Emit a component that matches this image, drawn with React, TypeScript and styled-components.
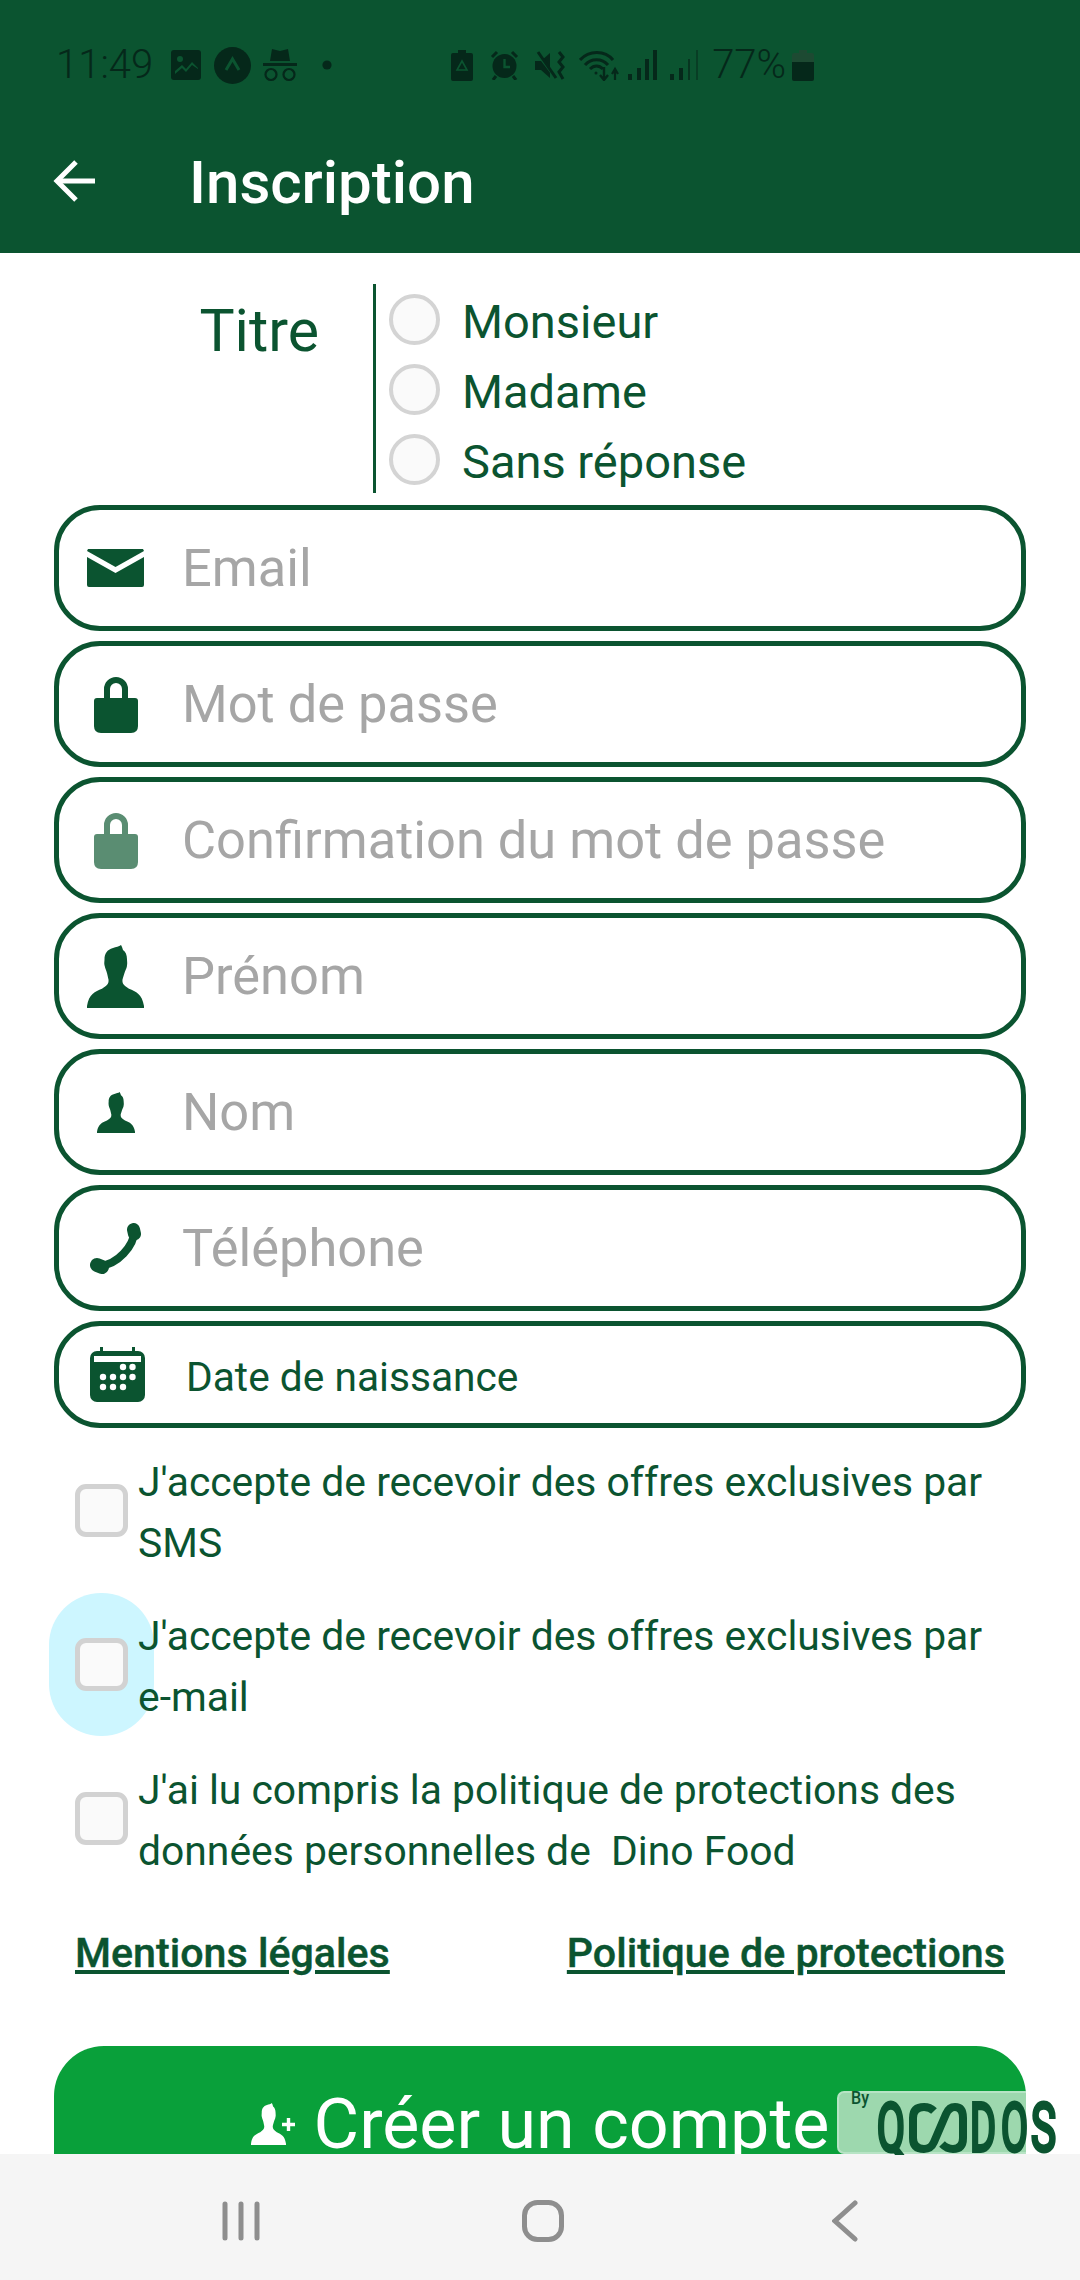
import React from "react";
import styled, { createGlobalStyle } from "styled-components";

const GREEN = "#0b5430";
const STATUS_INK = "#05281a";

const GlobalStyle = createGlobalStyle`
  html, body {
    margin: 0;
    padding: 0;
    background: #fff;
    font-family: Roboto, "Liberation Sans", sans-serif;
  }
`;

const Screen = styled.div`
  position: relative;
  width: 1080px;
  height: 2280px;
  display: flex;
  flex-direction: column;
  overflow: hidden;
  background: #fff;
`;

const Header = styled.header`
  flex: none;
  height: 253px;
  background: ${GREEN};
`;

const StatusBar = styled.div`
  height: 130px;
  display: flex;
  align-items: center;
  padding-left: 56px;
  color: ${STATUS_INK};
`;

const StatusText = styled.span<{ $left?: number }>`
  margin-left: ${(p) => p.$left ?? 0}px;
  font-size: 40px;
  font-weight: 300;
  line-height: 1;
`;

const StatusIcon = styled.svg<{ $left: number }>`
  flex: none;
  display: block;
  margin-left: ${(p) => p.$left}px;
`;

const TitleBar = styled.div`
  height: 101px;
  padding-bottom: 22px;
  display: flex;
  align-items: center;
  padding-left: 53px;
  gap: 94px;
`;

const PageTitle = styled.h1`
  margin: 4px 0 0;
  font-size: 60px;
  font-weight: 500;
  line-height: 1;
  color: #fff;
`;

const Content = styled.main`
  flex: 1;
  min-height: 0;
  overflow: hidden;
  padding: 31px 54px 0;
`;

const TitleRow = styled.div`
  display: flex;
  height: 209px;
`;

const TitleLabel = styled.div`
  width: 265px;
  margin-right: 54px;
  padding-top: 13px;
  text-align: right;
  font-size: 59px;
  line-height: 68px;
  color: ${GREEN};
`;

const RadioGroup = styled.div`
  border-left: 3px solid ${GREEN};
  padding-left: 13px;
`;

const RadioRow = styled.label`
  height: 70px;
  display: flex;
  align-items: center;
  gap: 22px;
  font-size: 47px;
  color: ${GREEN};
`;

const RadioCircle = styled.span`
  flex: none;
  width: 51px;
  height: 51px;
  box-sizing: border-box;
  border: 4px solid #d4d4d4;
  border-radius: 50%;
  background: #fafafa;
`;

const RadioText = styled.span`
  margin-top: 4px;
`;

const Fields = styled.div`
  margin-top: 12px;
  display: flex;
  flex-direction: column;
  gap: 10px;
`;

const Field = styled.div<{ $small?: boolean }>`
  box-sizing: border-box;
  height: ${(p) => (p.$small ? 107 : 126)}px;
  display: flex;
  align-items: center;
  border: 5px solid ${GREEN};
  border-radius: 46px;
`;

const FieldIcon = styled.span<{ $shift?: number }>`
  flex: none;
  width: 113px;
  display: flex;
  justify-content: center;
  padding-left: ${(p) => p.$shift ?? 0}px;
  box-sizing: border-box;
`;

const Placeholder = styled.span`
  margin-left: 10px;
  font-size: 52.4px;
  color: #a6a6a6;
`;

const DateText = styled.span`
  margin: 5px 0 0 14px;
  font-size: 40.7px;
  color: ${GREEN};
`;

const Checks = styled.div`
  margin-top: 22px;
  display: flex;
  flex-direction: column;
  gap: 32px;
`;

const CheckRow = styled.label`
  position: relative;
  display: flex;
  align-items: center;
  gap: 10px;
  margin-left: 21px;
  height: 122px;
  isolation: isolate;
`;

const TouchRipple = styled.span`
  position: absolute;
  left: -26px;
  top: -11px;
  width: 105px;
  height: 143px;
  border-radius: 52px;
  background: #cdf6ff;
  z-index: 0;
`;

const CheckBox = styled.span`
  position: relative;
  top: -1px;
  z-index: 1;
  flex: none;
  width: 53px;
  height: 53px;
  box-sizing: border-box;
  border: 5px solid #d2d2d2;
  border-radius: 11px;
  background: #fafafa;
`;

const CheckText = styled.span`
  position: relative;
  top: 2px;
  z-index: 1;
  font-size: 40.85px;
  line-height: 61px;
  white-space: pre;
  color: ${GREEN};
`;

const Links = styled.div`
  margin: 48px 21px 0;
  height: 50px;
  display: flex;
  align-items: center;
  justify-content: space-between;
`;

const LegalLink = styled.a`
  font-size: 41.2px;
  font-weight: 500;
  color: ${GREEN};
  text-decoration: underline;
  -webkit-text-stroke: 0.4px ${GREEN};
`;

const CreateButton = styled.button`
  width: 100%;
  height: 156px;
  margin-top: 68px;
  padding: 0;
  border: none;
  border-radius: 50px;
  background: #09a03a;
  color: #fff;
  display: flex;
  align-items: center;
  justify-content: center;
  gap: 19px;
  font-family: inherit;
  font-size: 70px;
`;

const NavBar = styled.nav`
  flex: none;
  box-sizing: border-box;
  height: 126px;
  padding: 8px 0 0 6px;
  background: #f5f5f5;
  display: flex;
  justify-content: center;
  align-items: center;
`;

const NavItem = styled.span`
  width: 302px;
  display: flex;
  justify-content: center;
`;

const Watermark = styled.div`
  position: absolute;
  left: 837px;
  top: 2091px;
  width: 189px;
  height: 63px;
  box-sizing: border-box;
  border: 2px solid #b7e4c5;
  border-right: none;
  border-radius: 7px 0 0 7px;
  background: #9dd8ae;
`;

const WatermarkLogo = styled.svg`
  position: absolute;
  left: 837px;
  top: 2091px;
`;

const personPath =
  "M34 0C32 1.5 29 2 26 3C20 4.5 17.5 9 17.5 14C17.5 16 17 18 17.5 20C18 22 18.5 24 19.5 26C20.5 29 21 32 21.5 34C22 38 20 40 15 43C8 46 2 48 0 60V62H57V60C55 48 49 46 42 43C37 40 35 38 35.5 34C36 32 37 29 38 26C39 24 40 22 40 20C40.5 18 40 16 40 14C40 10 38.5 6.5 36 5C35.5 3.5 35 1.5 34 0Z";

const MailIcon = () => (
  <svg width="57" height="38" viewBox="0 0 57 38" fill={GREEN}>
    <path d="M1 0H56L57 2L28.5 18L0 2Z" />
    <path d="M0 8L28.5 24L57 8V36A2 2 0 0 1 55 38H2A2 2 0 0 1 0 36Z" />
  </svg>
);

const LockIcon = ({ faded }: { faded?: boolean }) => (
  <svg width="44" height="57" viewBox="0 0 44 57" fill={faded ? "#5a8d72" : GREEN}>
    <path
      d="M13 24V13A9 9 0 0 1 31 13V24"
      fill="none"
      stroke={faded ? "#5a8d72" : GREEN}
      strokeWidth="6"
    />
    <path d="M3 22H41A3 3 0 0 1 44 25V50Q44 57 37 57H7Q0 57 0 50V25A3 3 0 0 1 3 22Z" />
  </svg>
);

const PersonIcon = ({ width, height }: { width: number; height: number }) => (
  <svg width={width} height={height} viewBox="0 0 57 62" preserveAspectRatio="none" fill={GREEN}>
    <path d={personPath} />
  </svg>
);

const PhoneIcon = () => (
  <svg width="51" height="51" viewBox="0 0 51 51" fill="none" stroke={GREEN} strokeLinecap="round">
    <path d="M44 9C44 22 28 42 9 43" strokeWidth="8" />
    <path d="M43.5 6.5L44.5 11" strokeWidth="13" />
    <path d="M7 42L12 44" strokeWidth="14" />
  </svg>
);

const CalendarIcon = () => {
  const dots = [
    [33, 20],
    [42.5, 20],
    [13, 30],
    [23, 30],
    [33, 30],
    [42.5, 30],
    [13, 40],
    [23, 40],
    [33, 40],
  ];
  return (
    <svg width="55" height="55" viewBox="0 0 55 55">
      <rect x="0" y="4" width="55" height="51" rx="7" fill={GREEN} />
      <rect x="10" y="0" width="3" height="6" fill={GREEN} />
      <rect x="42" y="0" width="3" height="6" fill={GREEN} />
      <rect x="4" y="9" width="47" height="6" fill="#fff" />
      {dots.map(([cx, cy]) => (
        <circle key={`${cx}-${cy}`} cx={cx} cy={cy} r="3.2" fill="#fff" />
      ))}
    </svg>
  );
};

const Statuses = () => (
  <StatusBar>
    <StatusText>11:49</StatusText>
    <StatusIcon $left={18} width="30" height="30" viewBox="0 0 30 30">
      <rect width="30" height="30" rx="3" fill={STATUS_INK} />
      <circle cx="9" cy="9" r="3" fill={GREEN} />
      <path d="M4 21L11 15L15 19L21 12L27 18V19L21 15L15 22L11 18L4 24Z" fill={GREEN} />
    </StatusIcon>
    <StatusIcon $left={13} width="37" height="37" viewBox="0 0 37 37">
      <circle cx="18.5" cy="18.5" r="18.5" fill={STATUS_INK} />
      <path d="M12 23L18.5 12L25 23" fill="none" stroke={GREEN} strokeWidth="3" />
    </StatusIcon>
    <StatusIcon $left={11} width="36" height="33" viewBox="0 0 36 33" fill={STATUS_INK}>
      <path d="M10 0L18 2L26 0L28 12H8Z" />
      <rect x="1" y="14" width="34" height="3" />
      <circle cx="9" cy="25.5" r="5.5" fill="none" stroke={STATUS_INK} strokeWidth="2.2" />
      <circle cx="27" cy="25.5" r="5.5" fill="none" stroke={STATUS_INK} strokeWidth="2.2" />
    </StatusIcon>
    <StatusIcon $left={24} width="10" height="10" viewBox="0 0 10 10">
      <circle cx="5" cy="5" r="4.6" fill={STATUS_INK} />
    </StatusIcon>
    <StatusIcon $left={119} width="22" height="31" viewBox="0 0 22 31">
      <path d="M7 0H15V3H20A2 2 0 0 1 22 5V29A2 2 0 0 1 20 31H2A2 2 0 0 1 0 29V5A2 2 0 0 1 2 3H7Z" fill={STATUS_INK} />
      <path d="M11 11L16 20H6Z" fill="none" stroke={GREEN} strokeWidth="1.6" />
    </StatusIcon>
    <StatusIcon $left={17} width="29" height="30" viewBox="0 0 29 30" fill={STATUS_INK}>
      <circle cx="14.5" cy="16" r="12" />
      <path d="M2 7L7 2M27 7L22 2M6 26L3 30M23 26L26 30" stroke={STATUS_INK} strokeWidth="3" />
      <path d="M14.5 9V17H20" fill="none" stroke={GREEN} strokeWidth="2.4" />
    </StatusIcon>
    <StatusIcon $left={16} width="30" height="29" viewBox="0 0 30 29" fill={STATUS_INK}>
      <path d="M0 10H6L15 2V27L6 19H0Z" />
      <path d="M0 0L19 25" stroke={GREEN} strokeWidth="2.5" />
      <path d="M3 1L21 27" stroke={STATUS_INK} strokeWidth="3" />
      <path d="M24 1L28 6L24 11L28 16L24 21L28 28" fill="none" stroke={STATUS_INK} strokeWidth="3" />
    </StatusIcon>
    <StatusIcon $left={14} width="41" height="31" viewBox="0 0 41 31" fill="none" stroke={STATUS_INK}>
      <path d="M1 10C10 0 26 0 34 10" strokeWidth="3" />
      <path d="M6 15C12 8 23 8 29 15" strokeWidth="3" />
      <path d="M11 19C15 15 20 15 24 19" strokeWidth="3" />
      <circle cx="17" cy="23" r="1.5" fill={STATUS_INK} stroke="none" />
      <path d="M25 17V29M21 25L25 30L29 25" strokeWidth="2.4" />
      <path d="M36 30V20M33 24L36 19L39 24" strokeWidth="2.2" />
    </StatusIcon>
    <StatusIcon $left={8} width="29" height="30" viewBox="0 0 29 30" fill={STATUS_INK}>
      <rect x="0" y="24" width="4" height="6" />
      <rect x="9" y="18" width="4" height="12" />
      <rect x="17" y="9" width="4" height="21" />
      <rect x="25" y="0" width="4" height="30" />
    </StatusIcon>
    <StatusIcon $left={13} width="29" height="30" viewBox="0 0 29 30" fill={STATUS_INK}>
      <rect x="0" y="24" width="4" height="6" />
      <rect x="9" y="18" width="4" height="12" />
      <rect x="18" y="9" width="2" height="21" opacity="0.7" />
      <rect x="26" y="0" width="2" height="30" opacity="0.5" />
    </StatusIcon>
    <StatusText $left={13}>77%</StatusText>
    <StatusIcon $left={6} width="22" height="31" viewBox="0 0 22 31">
      <path d="M7 0H15V3H20A2 2 0 0 1 22 5V12H0V5A2 2 0 0 1 2 3H7Z" fill="#1d4a32" />
      <path d="M0 12H22V29A2 2 0 0 1 20 31H2A2 2 0 0 1 0 29Z" fill={STATUS_INK} />
    </StatusIcon>
  </StatusBar>
);

const placeholders = [
  { text: "Email", icon: <MailIcon /> },
  { text: "Mot de passe", icon: <LockIcon /> },
  { text: "Confirmation du mot de passe", icon: <LockIcon faded /> },
  { text: "Prénom", icon: <PersonIcon width={57} height={63} /> },
  { text: "Nom", icon: <PersonIcon width={38} height={41} /> },
  { text: "Téléphone", icon: <PhoneIcon /> },
];

const App = () => {
  return (
    <Screen>
      <GlobalStyle />
      <Header>
        <Statuses />
        <TitleBar>
          <svg width="42" height="42" viewBox="0 0 42 42" fill="none" stroke="#fff" strokeWidth="5">
            <path d="M42 21H4" />
            <path d="M23 2L4 21L23 40" />
          </svg>
          <PageTitle>Inscription</PageTitle>
        </TitleBar>
      </Header>

      <Content>
        <TitleRow>
          <TitleLabel>Titre</TitleLabel>
          <RadioGroup>
            {["Monsieur", "Madame", "Sans réponse"].map((label) => (
              <RadioRow key={label}>
                <RadioCircle />
                <RadioText>{label}</RadioText>
              </RadioRow>
            ))}
          </RadioGroup>
        </TitleRow>

        <Fields>
          {placeholders.map((item) => (
            <Field key={item.text}>
              <FieldIcon>{item.icon}</FieldIcon>
              <Placeholder>{item.text}</Placeholder>
            </Field>
          ))}
          <Field $small>
            <FieldIcon $shift={4}>
              <CalendarIcon />
            </FieldIcon>
            <DateText>Date de naissance</DateText>
          </Field>
        </Fields>

        <Checks>
          <CheckRow>
            <CheckBox />
            <CheckText>
              J'accepte de recevoir des offres exclusives par
              <br />
              SMS
            </CheckText>
          </CheckRow>
          <CheckRow>
            <TouchRipple />
            <CheckBox />
            <CheckText>
              J'accepte de recevoir des offres exclusives par
              <br />
              e-mail
            </CheckText>
          </CheckRow>
          <CheckRow>
            <CheckBox />
            <CheckText>
              J'ai lu compris la politique de protections des
              <br />
              {"données personnelles de  Dino Food"}
            </CheckText>
          </CheckRow>
        </Checks>

        <Links>
          <LegalLink>Mentions légales</LegalLink>
          <LegalLink>Politique de protections</LegalLink>
        </Links>

        <CreateButton>
          <svg width="44" height="42" viewBox="0 0 44 42" fill="#fff">
            <svg x="0" y="0" width="35" height="42" viewBox="0 0 57 62" preserveAspectRatio="none">
              <path d={personPath} />
            </svg>
            <path d="M31 21.5H44M37.5 15V28" stroke="#fff" strokeWidth="3.4" />
          </svg>
          Créer un compte
        </CreateButton>
      </Content>

      <NavBar>
        <NavItem>
          <svg width="40" height="40" viewBox="0 0 40 40" stroke="#8e8e8e" strokeWidth="5" strokeLinecap="round">
            <path d="M4 3V37M20 3V37M36 3V37" />
          </svg>
        </NavItem>
        <NavItem>
          <svg width="42" height="42" viewBox="0 0 42 42" fill="none" stroke="#8e8e8e" strokeWidth="5">
            <rect x="2.5" y="2.5" width="37" height="37" rx="13" />
          </svg>
        </NavItem>
        <NavItem>
          <svg width="26" height="42" viewBox="0 0 26 42" fill="none" stroke="#8e8e8e" strokeWidth="5" strokeLinecap="round">
            <path d="M23 3L3 21L23 39" />
          </svg>
        </NavItem>
      </NavBar>

      <Watermark />
      <WatermarkLogo width="222" height="64" viewBox="0 0 222 64" fill={GREEN} fontFamily="Roboto, sans-serif">
        <text x="14" y="13" fontSize="18" fontWeight="500" textLength="18" lengthAdjust="spacingAndGlyphs">
          By
        </text>
        <g stroke={GREEN} strokeWidth="4" fontSize="66">
          <text x="40" y="60" textLength="28" lengthAdjust="spacingAndGlyphs">
            Q
          </text>
          <text x="133" y="60" textLength="26" lengthAdjust="spacingAndGlyphs">
            D
          </text>
          <text x="164" y="60" textLength="27" lengthAdjust="spacingAndGlyphs">
            O
          </text>
          <text x="194" y="60" textLength="25" lengthAdjust="spacingAndGlyphs">
            S
          </text>
        </g>
        <path
          d="M97 20Q93 16 87 16Q76 16 76 27V47Q76 58 87 58Q94 58 97 51L109 23Q112 16 118 16Q126 16 126 27V47Q126 58 116 58Q110 58 105 53"
          fill="none"
          stroke={GREEN}
          strokeWidth="8"
        />
      </WatermarkLogo>
    </Screen>
  );
};

export default App;
